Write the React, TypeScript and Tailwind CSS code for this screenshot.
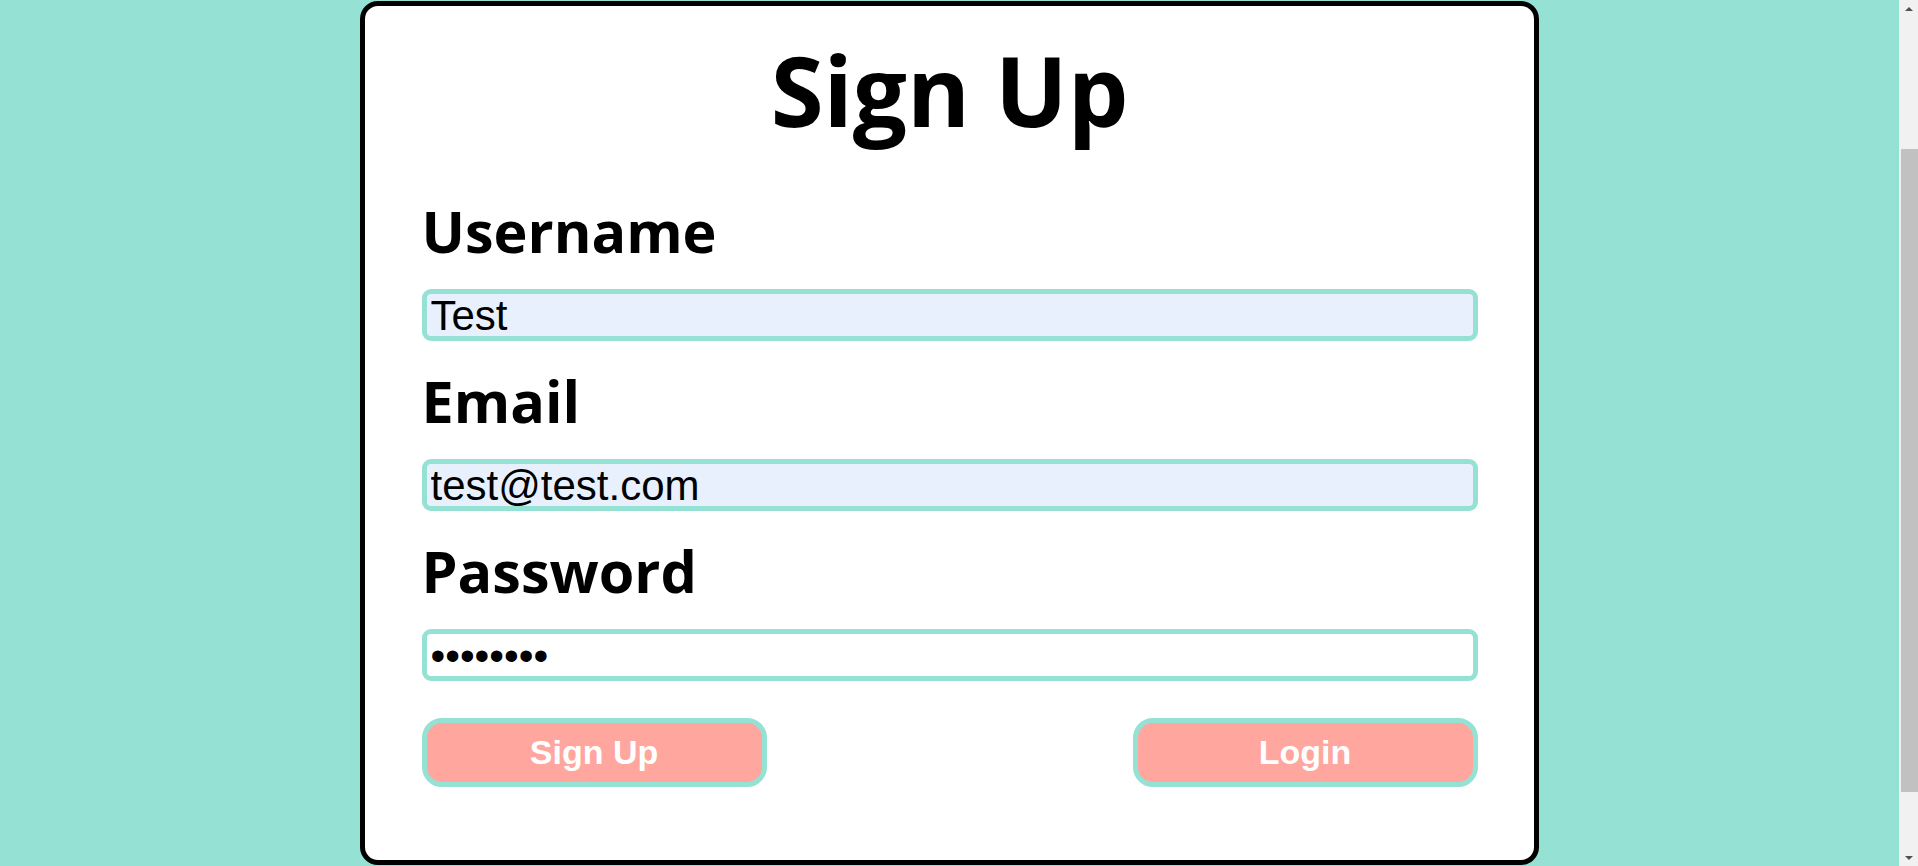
const heading = { fontFamily: '"Open Sans", "Liberation Sans", sans-serif' };
const arial = { fontFamily: '"Liberation Sans", Arial, sans-serif' };

function Field({ label, type, value, filled }: { label: string; type: string; value: string; filled: boolean }) {
  return (
    <>
      <label style={heading} className="mt-[22px] block text-[57.5px] font-bold leading-[76px] text-black first-of-type:mt-[38px]">
        {label}
      </label>
      <input
        type={type}
        defaultValue={value}
        style={arial}
        className={`mt-[20px] block h-[52px] w-full rounded-[9px] border-[5px] border-[#95e1d3] pl-[4px] pr-[2px] py-0 text-[42px] text-black outline-none ${
          filled ? "bg-[#e8f0fe]" : "bg-white"
        }`}
      />
    </>
  );
}

function Scrollbar() {
  return (
    <div className="flex h-full w-[19px] flex-col bg-[#f1f1f1]">
      <div className="flex h-[17px] items-center justify-center">
        <div className="h-0 w-0 border-x-[4px] border-b-[4px] border-x-transparent border-b-[#505050]" />
      </div>
      <div className="flex-1">
        <div className="ml-[2px] mt-[132px] h-[643px] bg-[#c1c1c1]" />
      </div>
      <div className="flex h-[17px] items-center justify-center">
        <div className="h-0 w-0 border-x-[4px] border-t-[4px] border-x-transparent border-t-[#505050]" />
      </div>
    </div>
  );
}

export default function App() {
  return (
    <div className="flex h-[866px] w-full overflow-hidden bg-[#95e1d3]">
      <main className="flex flex-1 justify-center pt-px">
        <div className="h-[864px] w-[1179px] rounded-[18px] border-[5px] border-black bg-white">
          <form className="mx-auto w-[1056px] pt-[18px]" onSubmit={(e) => e.preventDefault()}>
            <h1 style={heading} className="text-center text-[96px] font-bold leading-[131px] text-black">
              Sign Up
            </h1>
            <Field label="Username" type="text" value="Test" filled={true} />
            <Field label="Email" type="email" value="test@test.com" filled={true} />
            <Field label="Password" type="password" value="12345678" filled={false} />
            <div className="mt-[37px] flex justify-between">
              <button
                type="submit"
                style={arial}
                className="flex h-[69px] w-[345px] items-center justify-center rounded-[20px] border-[5px] border-[#95e1d3] bg-[#ffa69e] text-[34px] font-bold text-white"
              >
                Sign Up
              </button>
              <button
                type="button"
                style={arial}
                className="flex h-[69px] w-[345px] items-center justify-center rounded-[20px] border-[5px] border-[#95e1d3] bg-[#ffa69e] text-[34px] font-bold text-white"
              >
                Login
              </button>
            </div>
          </form>
        </div>
      </main>
      <Scrollbar />
    </div>
  );
}
